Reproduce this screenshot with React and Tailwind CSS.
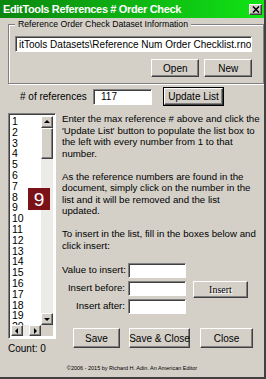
import React from "react"

const btn =
  "flex items-center justify-center whitespace-nowrap bg-[#d4d0c8] border border-t-white border-l-white border-r-[#404040] border-b-[#404040] shadow-[inset_-1px_-1px_0_#808080] text-[10px] text-black"
const field =
  "bg-white border border-t-[#808080] border-l-[#808080] border-r-white border-b-white shadow-[inset_1px_1px_0_#404040]"

function ArrowBtn({ dir, className }) {
  const pts = {
    up: "2,6 8,6 5,3",
    down: "2,4 8,4 5,7",
    left: "6,2 6,8 3,5",
    right: "4,2 4,8 7,5",
  }[dir]
  return (
    <div className={`${btn} ${className}`}>
      <svg width="10" height="10" viewBox="0 0 10 10">
        <polygon points={pts} fill="#000" />
      </svg>
    </div>
  )
}

function ListBox() {
  const items = Array.from({ length: 20 }, (_, i) => i + 1)
  return (
    <div className={`${field} w-[48px] h-[226px] flex flex-col p-[2px]`}>
      <div className="flex flex-1 min-h-0">
        <div className="flex-1 overflow-hidden pl-[1px]">
          {items.map((n) => (
            <div key={n} className="text-[10.5px] leading-[10.8px] h-[10.8px]">
              {n}
            </div>
          ))}
        </div>
        <div className="w-[12px] flex flex-col bg-[#ecebe8]">
          <ArrowBtn dir="up" className="h-[12px]" />
          <div className={`${btn} h-[31px]`} />
          <div className="flex-1" />
          <ArrowBtn dir="down" className="h-[12px]" />
        </div>
      </div>
      <div className="h-[11px] flex bg-[#ecebe8]">
        <ArrowBtn dir="left" className="w-[12px]" />
        <div className="flex-1" />
        <ArrowBtn dir="right" className="w-[12px]" />
        <div className="w-[12px] bg-[#d4d0c8]" />
      </div>
    </div>
  )
}

export default function App() {
  return (
    <div className="relative w-[266px] h-[379px] overflow-hidden bg-[#d4d0c8] border-r-2 border-b-2 border-r-[#404040] border-b-[#404040] font-['Liberation_Sans',Arial,sans-serif] text-black">
      {/* title bar */}
      <div className="h-[18px] flex items-center justify-between pl-[3px] pr-[2px] bg-linear-to-r from-[#0b860f] to-[#10e414]">
        <span className="text-white font-bold text-[11px] tracking-[-0.35px] leading-none whitespace-nowrap">
          EditTools References # Order Check
        </span>
        <div className={`${btn} w-[13px] h-[11px] mt-[1px]`}>
          <svg width="8" height="7" viewBox="0 0 8 7">
            <path d="M1 0.5 L7 6.5 M7 0.5 L1 6.5" stroke="#000" strokeWidth="1.6" />
          </svg>
        </div>
      </div>

      {/* dataset group */}
      <fieldset className="mx-[8px] border border-[#808080] shadow-[inset_1px_1px_0_#fff,1px_1px_0_#fff] pl-[6px] pr-[11px] pt-[6px] pb-[6px]">
        <legend className="px-[3px] bg-[#d4d0c8] text-[8.7px] leading-[12px] whitespace-nowrap">
          Reference Order Check Dataset Information
        </legend>
        <div className={`${field} h-[16px] flex items-center pl-[3px] overflow-hidden whitespace-nowrap text-[10px]`}>
          itTools Datasets\Reference Num Order Checklist.rno
        </div>
        <div className="flex justify-end gap-[5px] mt-[7px]">
          <div className={`${btn} w-[48px] h-[18px]`}>Open</div>
          <div className={`${btn} w-[48px] h-[18px]`}>New</div>
        </div>
      </fieldset>

      {/* references row */}
      <div className="flex items-center mt-[4px] h-[17px]">
        <span className="ml-[20px] w-[73px] text-[10px] whitespace-nowrap"># of references</span>
        <div className={`${field} w-[59px] h-[16px] flex items-center pl-[7px] text-[10px]`}>117</div>
        <div className={`${btn} ml-[12px] w-[59px] h-[17px] outline outline-1 outline-black`}>Update List</div>
      </div>

      {/* main */}
      <div className="flex mt-[8px] ml-[8px]">
        <div className="flex flex-col">
          <ListBox />
          <div className="text-[10px] mt-[2px] whitespace-nowrap">Count: 0</div>
        </div>
        <div className="ml-[6px] flex flex-col">
          <div className="text-[9.7px] leading-[11.5px] whitespace-nowrap">
            <p>
              Enter the max reference # above and click the
              <br />
              'Update List' button to populate the list box to
              <br />
              the left with every number from 1 to that
              <br />
              number.
            </p>
            <p className="mt-[11.5px]">
              As the reference numbers are found in the
              <br />
              document, simply click on the number in the
              <br />
              list and it will be removed and the list
              <br />
              updated.
            </p>
            <p className="mt-[11.5px]">
              To insert in the list, fill in the boxes below and
              <br />
              click insert:
            </p>
          </div>

          <div className="flex items-center mt-[12px]">
            <div className="flex flex-col gap-[3px]">
              {["Value to insert:", "Insert before:", "Insert after:"].map((l) => (
                <div key={l} className="flex items-center h-[15px]">
                  <span className="w-[63px] text-right text-[9.7px] whitespace-nowrap">{l}</span>
                  <div className={`${field} ml-[3px] w-[58px] h-[15px]`} />
                </div>
              ))}
            </div>
            <div className={`${btn} ml-[7px] w-[55px] h-[17px] mt-[1px] text-[#a19e97] [text-shadow:1px_1px_0_#fff] font-['Liberation_Serif',serif]`}>
              Insert
            </div>
          </div>

          <div className="flex mt-[14px] ml-[11px]">
            <div className={`${btn} w-[47px] h-[20px]`}>Save</div>
            <div className={`${btn} ml-[9px] w-[61px] h-[20px]`}>Save &amp; Close</div>
            <div className={`${btn} ml-[10px] w-[53px] h-[20px]`}>Close</div>
          </div>
        </div>
      </div>

      {/* footer */}
      <div className="absolute left-0 right-0 top-[364px] text-center text-[5.5px] leading-[8px] whitespace-nowrap">
        ©2006 - 2015 by Richard H. Adin. An American Editor
      </div>

      {/* number badge overlay */}
      <div className="absolute left-[28px] top-[188px] w-[22px] h-[22px] bg-[#7b1218] flex items-center justify-center text-white text-[19px] leading-none">
        9
      </div>
    </div>
  )
}
